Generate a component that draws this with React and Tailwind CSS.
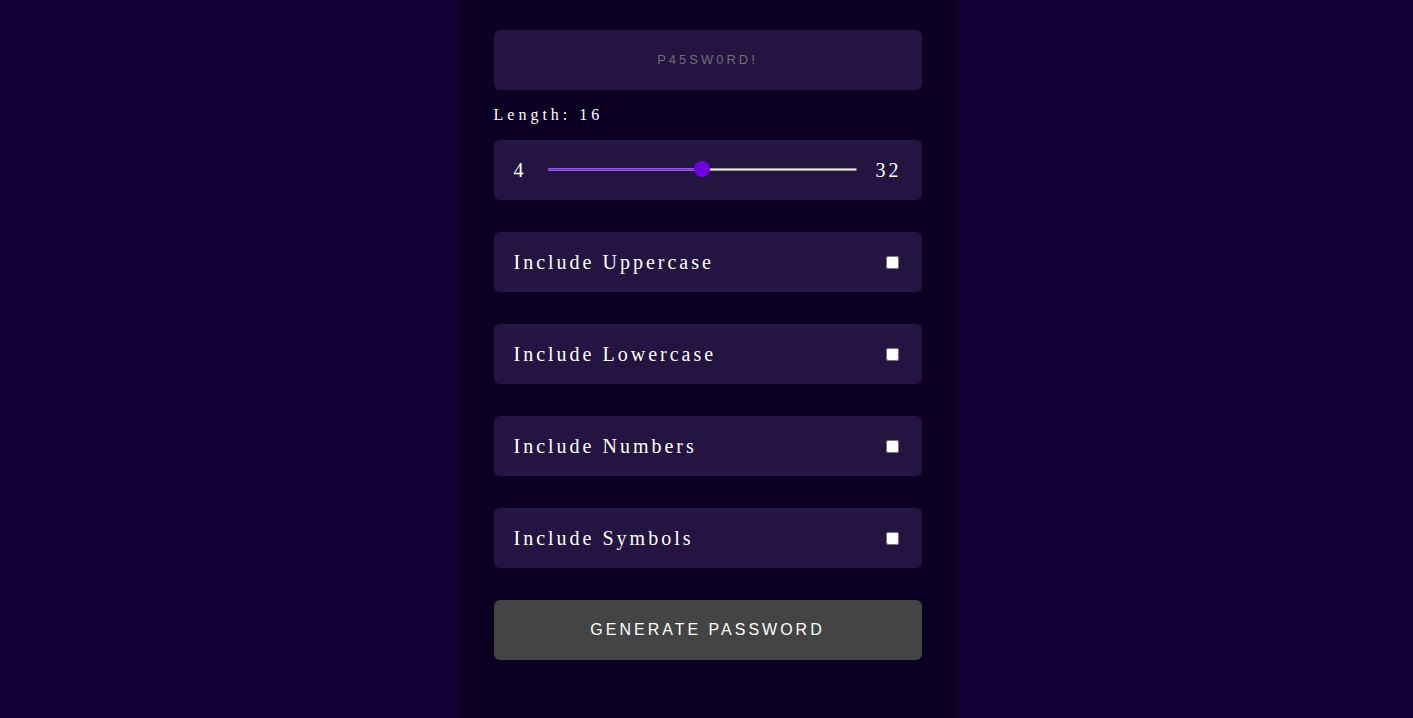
import React from "react";

const serif = { fontFamily: '"Liberation Serif", "Times New Roman", serif' };

function Row({ label }) {
  return (
    <label className="flex h-[60px] items-center justify-between rounded-md bg-[#231442] pl-5 pr-[23px]">
      <span className="text-[20px] tracking-[3px] text-white" style={serif}>{label}</span>
      <input type="checkbox" className="h-[13px] w-[13px]" />
    </label>
  );
}

export default function App() {
  return (
    <div className="flex min-h-screen justify-center bg-[#120034] pl-[2px]">
      <div className="flex w-[500px] flex-col bg-[#0b0024] px-9 pt-[30px] pb-10">
        <div className="flex h-[60px] items-center justify-center rounded-md bg-[#231442] font-['Liberation_Sans',Arial,sans-serif] text-[13px] tracking-[3px] text-[#6f6f6f]">
          P45SW0RD!
        </div>
        <div className="mt-[15px] text-[16px] leading-5 tracking-[4px] text-white" style={serif}>
          Length: 16
        </div>
        <div className="mt-[15px] flex h-[60px] items-center rounded-md bg-[#231442] pl-5 pr-5" style={serif}>
          <span className="text-[20px] tracking-[3px] text-white">4</span>
          <div className="relative ml-[21px] mr-[19px] mt-[-2px] h-[3px] flex-1">
            <div className="absolute inset-0 rounded-full border border-[#999] bg-[#e8e8e8]" />
            <div className="absolute left-0 top-0 h-[3px] w-[154px] rounded-full border-y border-[#9a5ae0] bg-[#7a2ed4]" />
            <div className="absolute left-[146px] top-[-7px] h-4 w-4 rounded-full bg-[#7000dd]" />
          </div>
          <span className="text-[20px] tracking-[3px] text-white">32</span>
        </div>
        <div className="mt-8 flex flex-col gap-8">
          <Row label="Include Uppercase" />
          <Row label="Include Lowercase" />
          <Row label="Include Numbers" />
          <Row label="Include Symbols" />
        </div>
        <button className="mt-8 flex h-[60px] items-center justify-center rounded-md bg-[#444444] font-['Liberation_Sans',Arial,sans-serif] text-[16px] tracking-[3px] text-white">
          GENERATE PASSWORD
        </button>
      </div>
    </div>
  );
}
